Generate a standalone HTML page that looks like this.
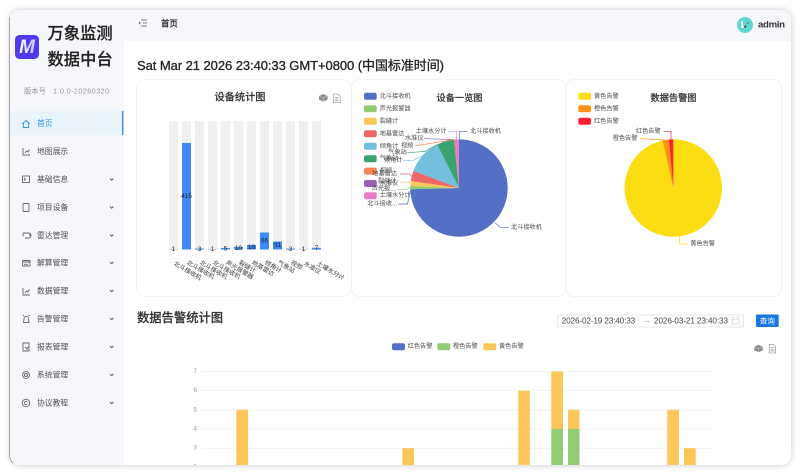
<!DOCTYPE html>
<html lang="zh">
<head>
<meta charset="utf-8">
<title>万象监测数据中台</title>
<style>
html,body{margin:0;padding:0;background:#fff;width:800px;height:475px;overflow:hidden}
#win{position:absolute;left:10px;top:10px;width:781px;height:455px;border-radius:10px;box-shadow:0 0 7px rgba(0,0,0,.22)}
svg{position:absolute;left:0;top:0}
text{font-family:"Liberation Sans","Noto Sans CJK SC",sans-serif;dominant-baseline:central}
.m{font-size:7.8px;fill:#4d4d4d}
.l{font-size:6.2px;fill:#4a4a4a}
.v{font-size:6.4px;fill:#222;text-anchor:middle}
.x{font-size:6.2px;fill:#3a3a3a}
.y{font-size:6.2px;fill:#999;text-anchor:end}
.t{font-weight:500;fill:#333;text-anchor:middle;stroke:#333;stroke-width:.15px}
.i{fill:none;stroke:#666;stroke-width:.9}
.s{fill:none;stroke-width:.7}
.g{stroke:#eef1f6;stroke-width:.8}
</style>
</head>
<body>
<div id="win"></div>
<svg width="800" height="475" viewBox="0 0 800 475" xmlns="http://www.w3.org/2000/svg">
<defs>
<clipPath id="w"><rect x="10" y="10" width="781" height="455" rx="10"/></clipPath>
<linearGradient id="mg" x1="0" y1="0" x2="1" y2="0"><stop offset="0" stop-color="#fff"/><stop offset="1" stop-color="#c9c2ff"/></linearGradient>
</defs>
<g clip-path="url(#w)">
<rect x="10" y="10" width="781" height="455" fill="#fff"/>
<rect x="10" y="10" width="781" height="31" fill="#f5f7fb"/>
<rect x="10" y="10" width="114" height="455" fill="#f5f7fb"/>

<!-- logo -->
<rect x="15" y="35" width="24" height="24" rx="4.5" fill="#5139f2"/>
<text x="27" y="47.5" font-size="19" font-weight="bold" font-style="italic" fill="url(#mg)" text-anchor="middle">M</text>
<text x="47.5" y="34" font-size="16.3" font-weight="500" fill="#222" stroke="#222" stroke-width=".2">万象监测</text>
<text x="47.5" y="60" font-size="16.3" font-weight="500" fill="#222" stroke="#222" stroke-width=".2">数据中台</text>
<text x="24" y="91" font-size="7.3" fill="#999">版本号</text>
<text x="53" y="91" font-size="7.3" fill="#999" textLength="56">1.0.0-20260320</text>

<!-- menu -->
<rect x="10" y="111" width="114" height="24" fill="#e8f5ff"/>
<rect x="122" y="111" width="1.4" height="24" fill="#3b8eea"/>
<path d="M22.3 124l3.7-3.6 3.7 3.6M23.4 123.2v4.3h5.2v-4.3" fill="none" stroke="#2a8ff0" stroke-width=".9"/>
<text x="37" y="123.5" class="m" style="fill:#2a8ff0">首页</text>

<path class="i" d="M23 148v7h7M25 153l1.5-2 1.5 1 1.5-2.5"/>
<text x="37" y="151.5" class="m">地图展示</text>

<rect class="i" x="22.5" y="176" width="7" height="6.5"/><path class="i" d="M24 178l1.5 1.2L24 180.5"/>
<text x="37" y="179.5" class="m">基础信息</text>

<rect class="i" x="23" y="203.5" width="6" height="8" rx=".8"/>
<text x="37" y="207.5" class="m">项目设备</text>

<path class="i" d="M23 233h5.5a1.5 1.5 0 0 1 0 5H25M23 233v3.5M29.5 234l.8 1-.8 1"/>
<text x="37" y="235.5" class="m">雷达管理</text>

<rect class="i" x="22.5" y="260.5" width="7.5" height="5.5" rx=".5"/><path class="i" d="M22.5 262h7.5M24 264.3h4"/>
<text x="37" y="263" class="m">解算管理</text>

<path class="i" d="M23 288v7h7M25 293l1.5-2 1.5 1 1.5-2.5"/>
<text x="37" y="291" class="m">数据管理</text>

<path class="i" d="M23.5 322.5h5.5l-.6-4a2.1 2.1 0 0 0-4.3 0zM24 315l-1 1M28.5 315l1 1"/>
<text x="37" y="319" class="m">告警管理</text>

<path class="i" d="M23 343h6v8h-6z"/><path class="i" d="M25 347l2 2 2-3"/>
<text x="37" y="347" class="m">报表管理</text>

<circle class="i" cx="26" cy="375" r="3.4"/><circle class="i" cx="26" cy="375" r="1.5"/>
<text x="37" y="375" class="m">系统管理</text>

<circle class="i" cx="26" cy="403" r="3.8"/><path class="i" d="M27.3 401.8a1.7 1.7 0 1 0 0 2.4"/>
<text x="37" y="403" class="m">协议教程</text>

<g fill="none" stroke="#555" stroke-width=".9">
<path d="M110 178.5l1.7 1.7 1.7-1.7"/>
<path d="M110 206.5l1.7 1.7 1.7-1.7"/>
<path d="M110 234.5l1.7 1.7 1.7-1.7"/>
<path d="M110 262l1.7 1.7 1.7-1.7"/>
<path d="M110 290l1.7 1.7 1.7-1.7"/>
<path d="M110 318l1.7 1.7 1.7-1.7"/>
<path d="M110 346l1.7 1.7 1.7-1.7"/>
<path d="M110 374l1.7 1.7 1.7-1.7"/>
<path d="M110 402l1.7 1.7 1.7-1.7"/>
</g>

<!-- header -->
<path d="M141 20h6M143 23h4M141 26h6M139 21.8l1.2 1.2-1.2 1.2" fill="none" stroke="#555" stroke-width=".8"/>
<text x="161" y="23.5" font-size="8.4" font-weight="500" fill="#333" stroke="#333" stroke-width=".15">首页</text>
<circle cx="745" cy="25" r="8" fill="#5fd8d0"/>
<path d="M741 21l2 1 .6 6h-2.2z" fill="#fff"/>
<path d="M744 27l1.6-1.8.8 1.4-1.2 1.2z" fill="#222"/><path d="M747 23.5l1.6-1" stroke="#333" stroke-width=".6"/>
<text x="758" y="25" font-size="9.6" font-weight="bold" fill="#333" textLength="27">admin</text>

<!-- date title -->
<text x="137" y="65.5" font-size="13" fill="#222" stroke="#222" stroke-width=".3" textLength="307">Sat Mar 21 2026 23:40:33 GMT+0800 (中国标准时间)</text>

<!-- cards -->
<rect x="136.5" y="79.5" width="215" height="217" rx="8" fill="#fff" stroke="#f3f3f3"/>
<rect x="351.5" y="79.5" width="214" height="217" rx="8" fill="#fff" stroke="#f3f3f3"/>
<rect x="565.5" y="79.5" width="216" height="217" rx="8" fill="#fff" stroke="#f3f3f3"/>

<!-- bar chart -->
<text x="240" y="98" font-size="10.2" class="t">设备统计图</text>
<path d="M319 96l4.3-1.9 4.3 1.9v3.6l-4.3 1.9-4.3-1.9z" fill="#8a8a8a"/><path d="M319 96l4.3 1.9 4.3-1.9M323.3 97.9v3.6" fill="none" stroke="#ddd" stroke-width=".5"/>
<path d="M333.5 94h4.3l2.4 2.4v6.3h-6.7zM335 97.3h3.7M335 99h3.7M335 100.7h3.7" fill="none" stroke="#8a8a8a" stroke-width=".6"/>

<g fill="#f0f0f0">
<rect x="169" y="121" width="9" height="128.5"/><rect x="182" y="121" width="9" height="128.5"/><rect x="195" y="121" width="9" height="128.5"/><rect x="208" y="121" width="9" height="128.5"/><rect x="221" y="121" width="9" height="128.5"/><rect x="234" y="121" width="9" height="128.5"/><rect x="247" y="121" width="9" height="128.5"/><rect x="260" y="121" width="9" height="128.5"/><rect x="273" y="121" width="9" height="128.5"/><rect x="286" y="121" width="9" height="128.5"/><rect x="299" y="121" width="9" height="128.5"/><rect x="312" y="121" width="9" height="128.5"/>
</g>
<g fill="#3f88f8">
<rect x="169" y="249" width="9" height=".6" opacity=".5"/>
<rect x="182" y="143" width="9" height="106.5"/>
<rect x="195" y="248.6" width="9" height="1"/>
<rect x="208" y="249" width="9" height=".6" opacity=".5"/>
<rect x="221" y="248" width="9" height="1.5"/>
<rect x="234" y="247" width="9" height="2.5"/>
<rect x="247" y="245" width="9" height="4.5"/>
<rect x="260" y="232.5" width="9" height="17"/>
<rect x="273" y="241.5" width="9" height="8"/>
<rect x="286" y="248.6" width="9" height="1"/>
<rect x="299" y="249" width="9" height=".6" opacity=".5"/>
<rect x="312" y="247.8" width="9" height="1.8"/>
</g>
<path d="M186.5 250v1.5M173.5 250v1.5M199.5 250v1.5M212.5 250v1.5M225.5 250v1.5M238.5 250v1.5M251.5 250v1.5M264.5 250v1.5M277.5 250v1.5M290.5 250v1.5M303.5 250v1.5M316.5 250v1.5" stroke="#c8d4e8" stroke-width=".6"/>
<text x="173.5" y="249.5" class="v">1</text>
<text x="186.5" y="196.5" class="v">415</text>
<text x="199.5" y="249.5" class="v">3</text>
<text x="212.5" y="249.5" class="v">1</text>
<text x="225.5" y="249" class="v">5</text>
<text x="238.5" y="248.5" class="v">10</text>
<text x="251.5" y="247.5" class="v">18</text>
<text x="264.5" y="241" class="v">66</text>
<text x="277.5" y="245.5" class="v">31</text>
<text x="290.5" y="249.5" class="v">3</text>
<text x="303.5" y="249.5" class="v">1</text>
<text x="316.5" y="248.5" class="v">7</text>

<text class="x" transform="translate(174 263.5) rotate(30)">北斗接收机</text>
<text class="x" transform="translate(187 262.5) rotate(30)">北斗接收机</text>
<text class="x" transform="translate(200 262.5) rotate(30)">北斗接收机</text>
<text class="x" transform="translate(213 262.5) rotate(30)">北斗接收机</text>
<text class="x" transform="translate(226 262.5) rotate(30)">声光报警器</text>
<text class="x" transform="translate(239 262.5) rotate(30)">裂缝计</text>
<text class="x" transform="translate(252 262.5) rotate(30)">地基雷达</text>
<text class="x" transform="translate(265 262.5) rotate(30)">倾角计</text>
<text class="x" transform="translate(278 262.5) rotate(30)">气象站</text>
<text class="x" transform="translate(291 262.5) rotate(30)">视频</text>
<text class="x" transform="translate(304 263.5) rotate(30)">水准仪</text>
<text class="x" transform="translate(317 263.5) rotate(30)">土壤水分计</text>

<!-- pie 1 -->
<text x="459.5" y="98" font-size="9.2" class="t">设备一览图</text>
<g>
<rect x="364" y="92.8" width="12.7" height="7" rx="2" fill="#5470c6"/><text x="379.7" y="96.3" class="l">北斗接收机</text>
<rect x="364" y="105.3" width="12.7" height="7" rx="2" fill="#91cc75"/><text x="379.7" y="108.8" class="l">声光报警器</text>
<rect x="364" y="117.8" width="12.7" height="7" rx="2" fill="#fac858"/><text x="379.7" y="121.3" class="l">裂缝计</text>
<rect x="364" y="130.3" width="12.7" height="7" rx="2" fill="#ee6666"/><text x="379.7" y="133.8" class="l">地基雷达</text>
<rect x="364" y="142.8" width="12.7" height="7" rx="2" fill="#73c0de"/><text x="379.7" y="146.3" class="l">倾角计</text>
<rect x="364" y="155.2" width="12.7" height="7" rx="2" fill="#3ba272"/><text x="379.7" y="158.7" class="l">气象站</text>
<rect x="364" y="167.6" width="12.7" height="7" rx="2" fill="#fc8452"/><text x="379.7" y="171.1" class="l">视频</text>
<rect x="364" y="180" width="12.7" height="7" rx="2" fill="#9a60b4"/><text x="379.7" y="183.5" class="l">水准仪</text>
<rect x="364" y="192.2" width="12.7" height="7" rx="2" fill="#ea7ccc"/><text x="379.7" y="195.7" class="l">土壤水分计</text>
</g>
<path d="M459 188L459 139.3A48.7 48.7 0 1 1 410.32 189.28Z" fill="#5470c6"/>
<path d="M459 188L410.32 189.28A48.7 48.7 0 0 1 410.34 185.96Z" fill="#91cc75"/>
<path d="M459 188L410.34 185.96A48.7 48.7 0 0 1 410.81 180.97Z" fill="#fac858"/>
<path d="M459 188L410.81 180.97A48.7 48.7 0 0 1 413.47 170.71Z" fill="#ee6666"/>
<path d="M459 188L413.47 170.71A48.7 48.7 0 0 1 437.12 144.49Z" fill="#73c0de"/>
<path d="M459 188L437.12 144.49A48.7 48.7 0 0 1 453.91 139.57Z" fill="#3ba272"/>
<path d="M459 188L453.91 139.57A48.7 48.7 0 0 1 454.75 139.49Z" fill="#fc8452"/>
<path d="M459 188L454.75 139.49A48.7 48.7 0 0 1 455.35 139.44Z" fill="#9a60b4"/>
<path d="M459 188L455.35 139.44A48.7 48.7 0 0 1 459 139.3Z" fill="#ea7ccc"/>

<polyline class="s" stroke="#5470c6" points="459.3,139.3 459.3,131.3 467.5,131.3"/>
<polyline class="s" stroke="#5470c6" points="495,222.7 500,227.3 509,227.3"/>
<polyline class="s" stroke="#ea7ccc" points="448.3,131.3 456.7,131.3 456.7,139.5"/>
<polyline class="s" stroke="#9a60b4" points="424,138.7 453.5,139.5"/>
<polyline class="s" stroke="#fc8452" points="415,146 453,139.6"/>
<polyline class="s" stroke="#3ba272" points="407.5,152.7 425,151.5 437,144.5"/>
<polyline class="s" stroke="#73c0de" points="403.5,160.3 413.5,160.3 421.5,156"/>
<polyline class="s" stroke="#ee6666" points="400,174 408.5,174 412.5,176.5"/>
<polyline class="s" stroke="#fac858" points="400,182 410.7,182"/>
<polyline class="s" stroke="#91cc75" points="396.5,189.3 406.5,189.3 410.7,187.3"/>
<polyline class="s" stroke="#5470c6" points="398.5,204 407.5,204 410.7,190"/>

<text x="470" y="131.3" class="l">北斗接收机</text>
<text x="511" y="227.3" class="l">北斗接收机</text>
<text x="415.7" y="131.3" class="l">土壤水分计</text>
<text x="405" y="138.7" class="l">水准仪</text>
<text x="401" y="146" class="l">视频</text>
<text x="388.3" y="152.7" class="l">气象站</text>
<text x="384" y="160.3" class="l">倾角计</text>
<text x="372.3" y="174" class="l">地基雷达</text>
<text x="378" y="181.7" class="l">裂缝计</text>
<text x="371.7" y="189" class="l">声光报...</text>
<text x="367.3" y="204" class="l">北斗接收...</text>

<!-- pie 2 -->
<text x="673.5" y="98" font-size="9.2" class="t">数据告警图</text>
<rect x="578.3" y="92.8" width="12.7" height="7" rx="2" fill="#fcdc12"/><text x="594" y="96.3" class="l">黄色告警</text>
<rect x="578.3" y="105.3" width="12.7" height="7" rx="2" fill="#ff9212"/><text x="594" y="108.8" class="l">橙色告警</text>
<rect x="578.3" y="117.8" width="12.7" height="7" rx="2" fill="#ff2030"/><text x="594" y="121.3" class="l">红色告警</text>
<path d="M673.3 188L673.3 139.3A48.7 48.7 0 1 1 662.51 140.51Z" fill="#fcdc12"/>
<path d="M673.3 188L662.51 140.51A48.7 48.7 0 0 1 668.97 139.5Z" fill="#ff9212"/>
<path d="M673.3 188L668.97 139.5A48.7 48.7 0 0 1 673.3 139.3Z" fill="#ff2030"/>
<polyline class="s" stroke="#ff2030" points="663.3,131.3 671,131.3 671,139.5"/>
<polyline class="s" stroke="#ff9212" points="640,138.7 665,140"/>
<polyline class="s" stroke="#fcdc12" points="679.3,236 679.3,244 688.3,244"/>
<text x="636" y="131.3" class="l">红色告警</text>
<text x="612.7" y="138.7" class="l">橙色告警</text>
<text x="690.3" y="244" class="l">黄色告警</text>

<!-- bottom -->
<text x="137" y="318" font-size="12.3" font-weight="500" fill="#333" stroke="#333" stroke-width=".2">数据告警统计图</text>
<rect x="557.5" y="315" width="186" height="12" rx="1.5" fill="#fff" stroke="#e8e8e8"/>
<text x="561.7" y="321" font-size="8.2" fill="#444" textLength="73.5">2026-02-19 23:40:33</text>
<path d="M643 321.5h6l-1.5-1" fill="none" stroke="#bbb" stroke-width=".6"/>
<text x="654" y="321" font-size="8.2" fill="#444" textLength="74">2026-03-21 23:40:33</text>
<path d="M732.5 317.5h6.5v6.5h-6.5zM732.5 319.5h6.5" fill="none" stroke="#ccc" stroke-width=".6"/>
<rect x="756" y="314.5" width="22.7" height="12.5" rx="1" fill="#1677e0"/>
<text x="767.3" y="321" font-size="7.6" fill="#fff" text-anchor="middle">查询</text>

<rect x="392" y="343.2" width="13" height="7" rx="2" fill="#5470c6"/><text x="407.7" y="346.7" class="l">红色告警</text>
<rect x="437.3" y="343.2" width="13" height="7" rx="2" fill="#91cc75"/><text x="453" y="346.7" class="l">橙色告警</text>
<rect x="483.3" y="343.2" width="13" height="7" rx="2" fill="#fac858"/><text x="499" y="346.7" class="l">黄色告警</text>
<path d="M754.3 346.8l4.2-1.9 4.2 1.9v3.6l-4.2 1.9-4.2-1.9z" fill="#8a8a8a"/><path d="M754.3 346.8l4.2 1.9 4.2-1.9M758.5 348.7v3.6" fill="none" stroke="#ddd" stroke-width=".5"/>
<path d="M769.2 344.3h4.1l2.4 2.4v6.3h-6.5zM770.6 347.5h3.7M770.6 349.2h3.7M770.6 350.9h3.7" fill="none" stroke="#8a8a8a" stroke-width=".6"/>

<path class="g" d="M201 371.4H714.3M201 390.6H714.3M201 409.8H714.3M201 429H714.3M201 448.2H714.3"/>
<text x="197" y="371.4" class="y">7</text>
<text x="197" y="390.6" class="y">6</text>
<text x="197" y="409.8" class="y">5</text>
<text x="197" y="429" class="y">4</text>
<text x="197" y="448.2" class="y">3</text>
<text x="197" y="467" class="y">2</text>
<g fill="#fcc75a">
<rect x="236.3" y="409.8" width="11.7" height="56"/>
<rect x="402.3" y="448.2" width="11.7" height="18"/>
<rect x="518.3" y="390.6" width="11.5" height="75"/>
<rect x="551.3" y="371.4" width="11.7" height="58"/>
<rect x="568" y="409.8" width="11.5" height="20"/>
<rect x="667.3" y="409.8" width="11.7" height="56"/>
<rect x="684" y="448.2" width="11.7" height="18"/>
</g>
<g fill="#91cc75">
<rect x="551.3" y="429" width="11.7" height="37"/>
<rect x="568" y="429" width="11.5" height="37"/>
</g>
</g>
<path d="M9.7 17V456a9 9 0 0 0 3.5 7" fill="none" stroke="#555c70" stroke-width=".6" opacity=".75"/>
</svg>
</body>
</html>
